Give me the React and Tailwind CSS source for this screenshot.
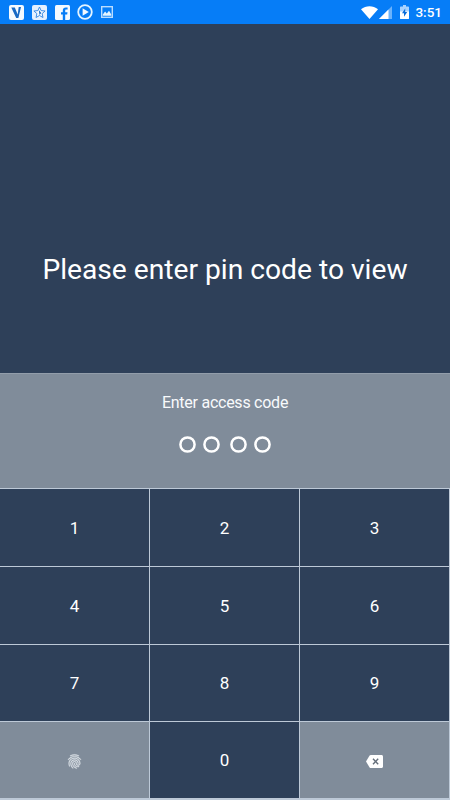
import React from 'react';
import { MdFingerprint } from 'react-icons/md';

const digits = ['1', '2', '3', '4', '5', '6', '7', '8', '9'];

const StatusBar = () => (
  <header className="flex h-6 shrink-0 items-center justify-between bg-[#067df7] pl-[9px] pr-2 text-white">
    <div className="flex items-center">
      <svg className="h-[15px] w-[15px]" viewBox="0 0 15 15" aria-hidden="true">
        <rect width="15" height="15" rx="2" fill="#f4faff" />
        <path d="M2.3 2.5h3.5l2.9 6.9 1-7.4H12l-2.6 11H7.2z" fill="#1769c4" />
      </svg>
      <svg className="ml-2 h-[15px] w-[15px]" viewBox="0 0 15 15" aria-hidden="true">
        <rect width="15" height="15" rx="2" fill="#e4f1ff" />
        <path
          d="M7.5 2l1.6 3.6 4 .4-3 2.6.9 3.9-3.5-2-3.5 2 .9-3.9-3-2.6 4-.4z"
          fill="#f4faff"
          stroke="#3f8fe6"
          strokeWidth="1"
        />
        <path d="M6.8 5l2.5 3-1.8 2z" fill="#1769c4" />
      </svg>
      <svg className="ml-2 h-[15px] w-[15px]" viewBox="0 0 15 15" aria-hidden="true">
        <rect width="15" height="15" rx="1.5" fill="#f4faff" />
        <path d="M7.8 15V9.4H6V7.2h1.8V5.4c0-2 1.1-3 3-3h1.8v2.2h-1.4c-.8 0-1 .4-1 1v1.6h2.3l-.3 2.2h-2V15z" fill="#067df7" />
      </svg>
      <svg className="ml-[7px] h-4 w-4" viewBox="0 0 16 16" aria-hidden="true">
        <circle cx="8" cy="8" r="6.8" fill="none" stroke="#e4f4ff" strokeWidth="1.8" />
        <path d="M5.6 4.3L11.8 8l-6.2 3.7z" fill="#f4faff" />
      </svg>
      <svg className="ml-2 h-3 w-3" viewBox="0 0 12 12" aria-hidden="true">
        <rect x=".7" y=".7" width="10.6" height="10.6" fill="none" stroke="#b9dcff" strokeWidth="1.4" />
        <path d="M1.8 9.7V8.4l2.3-2.9 1.7 2 2.2-2.8 2.3 3.8v1.2z" fill="#e4f4ff" />
      </svg>
    </div>
    <div className="flex items-center">
      <svg className="h-[13px] w-[17px]" viewBox="0 0 17 13" aria-hidden="true">
        <path d="M0 3.2C5-.9 12-.9 17 3.2L8.5 13z" fill="#fff" />
      </svg>
      <svg className="ml-px h-[13px] w-[13px]" viewBox="0 0 13 13" aria-hidden="true">
        <path d="M13 0v13H0z" fill="#6bb2fb" />
        <path d="M9.5 3.5V13H0z" fill="#fff" />
      </svg>
      <svg className="ml-2 h-[14px] w-[9px]" viewBox="0 0 9 14" aria-hidden="true">
        <path d="M3 0h3v1.5h2.2c.5 0 .8.3.8.8v10.9c0 .5-.3.8-.8.8H.8c-.5 0-.8-.3-.8-.8V2.3c0-.5.3-.8.8-.8H3z" fill="#a8d3ff" />
        <path d="M0 6.5h9v6.7c0 .5-.3.8-.8.8H.8c-.5 0-.8-.3-.8-.8z" fill="#fff" />
        <path d="M5.2 3.4L2 8.3h2v3.4L7.2 7h-2z" fill="#0b6edb" />
      </svg>
      <span className="ml-[6px] pt-0.5 text-[13.5px] font-medium leading-none">3:51</span>
    </div>
  </header>
);

const BackspaceIcon = () => (
  <svg className="h-[13px] w-[17px]" viewBox="0 0 17 13" aria-hidden="true">
    <path d="M4.8 0h10.7c.8 0 1.5.7 1.5 1.5v10c0 .8-.7 1.5-1.5 1.5H4.8c-.5 0-.9-.2-1.2-.6L0 6.5 3.6.6C3.9.2 4.3 0 4.8 0z" fill="#fff" />
    <path d="M7 3.8l5.2 5.4M12.2 3.8L7 9.2" stroke="#656f7b" strokeWidth="1.4" />
  </svg>
);

const PinDot = () => (
  <svg className="h-[17px] w-[17px]" viewBox="0 0 17 17" aria-hidden="true">
    <circle cx="8.5" cy="8.5" r="7.1" fill="none" stroke="#fff" strokeWidth="2.5" />
  </svg>
);

const Key = ({ children, muted = false, label }) => (
  <button
    type="button"
    aria-label={label}
    className={`flex items-center justify-center border-r border-t border-[#bdc9d7] pt-0.5 text-[17px] text-white ${
      muted ? 'bg-[#808c9a]' : 'bg-[#2e4059]'
    }`}
  >
    {children}
  </button>
);

export default function App() {
  return (
    <main className="flex h-[800px] w-[450px] flex-col overflow-hidden bg-[#2e4059] font-[Roboto,sans-serif]">
      <StatusBar />
      <section className="flex h-[349px] shrink-0 justify-center pt-[226px]">
        <h1 className="whitespace-nowrap text-[28.2px] leading-10 text-white">Please enter pin code to view</h1>
      </section>
      <section className="flex h-[115px] shrink-0 flex-col items-center border-t border-[#929daa] bg-[#808c9a] pt-[17px]">
        <p className="text-base leading-6 tracking-[-0.25px] text-[#f8fafc]">Enter access code</p>
        <div className="mt-[21px] flex gap-[10px]">
          <div className="flex gap-[7px]">
            <PinDot />
            <PinDot />
          </div>
          <div className="flex gap-[7px]">
            <PinDot />
            <PinDot />
          </div>
        </div>
      </section>
      <section className="grid h-[312px] shrink-0 grid-cols-3 grid-rows-[78px_78px_77px_77px] border-b-2 border-[#bdc9d7]">
        {digits.map((digit) => (
          <Key key={digit}>{digit}</Key>
        ))}
        <Key muted label="Fingerprint">
          <MdFingerprint
            aria-hidden="true"
            size={17}
            className="stroke-[#dce3e9] stroke-[0.5] text-[#dce3e9] [&>path:first-child]:stroke-none"
          />
        </Key>
        <Key>0</Key>
        <Key muted label="Delete">
          <BackspaceIcon />
        </Key>
      </section>
    </main>
  );
}
